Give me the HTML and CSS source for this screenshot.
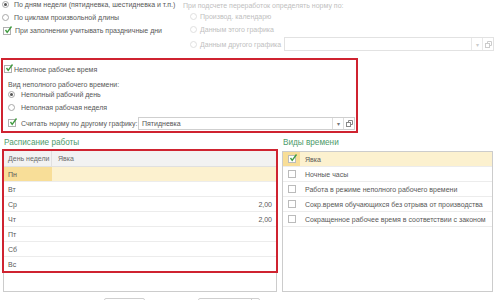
FILE: index.html
```html
<!DOCTYPE html>
<html>
<head>
    <title>График работы</title>
    <meta name="viewport" content="width=device-width,initial-scale=1">
    <link rel="stylesheet" href="styles.css">
</head>
<body>
<div class="page">
    <!-- верхняя часть: способ заполнения и норма -->
    <div class="top">
        <div class="top-left">
            <div class="opt r1"><span class="radio on"></span>По дням недели (пятидневка, шестидневка и т.п.)</div>
            <div class="opt r2"><span class="radio"></span>По циклам произвольной длины</div>
            <div class="opt r3"><span class="check on"><svg width="10" height="10" viewBox="0 0 10 10"><path d="M2.5 5 L4.2 7.3 L8.5 1.5" fill="none" stroke="#3f9b3f" stroke-width="1.4"/></svg></span>При заполнении учитывать праздничные дни</div>
        </div>
        <div class="top-right">
            <div class="caption">При подсчете переработок определять норму по:</div>
            <div class="opt dis q1"><span class="radio"></span>Производ. календарю</div>
            <div class="opt dis q2"><span class="radio"></span>Данным этого графика</div>
            <div class="opt dis q3"><span class="radio"></span><span class="lbl">Данным другого графика</span>
                <div class="field">
                    <span class="field-text"></span>
                    <span class="fbtn">▾</span>
                    <span class="fbtn"><svg width="7" height="7" viewBox="0 0 7 7"><rect x="0.5" y="2.5" width="4" height="4" fill="none" stroke="#ccc"/><path d="M2.5 2.5 V0.5 H6.5 V4.5 H4.5" fill="none" stroke="#ccc"/></svg></span>
                </div>
            </div>
        </div>
    </div>

    <!-- неполное рабочее время -->
    <div class="part">
        <div class="opt p1"><span class="check on"><svg width="10" height="10" viewBox="0 0 10 10"><path d="M2.5 5 L4.2 7.3 L8.5 1.5" fill="none" stroke="#3f9b3f" stroke-width="1.4"/></svg></span>Неполное рабочее время</div>
        <div class="opt p2">Вид неполного рабочего времени:</div>
        <div class="opt p3"><span class="radio on"></span>Неполный рабочий день</div>
        <div class="opt p4"><span class="radio"></span>Неполная рабочая неделя</div>
        <div class="opt p5"><span class="check on"><svg width="10" height="10" viewBox="0 0 10 10"><path d="M2.5 5 L4.2 7.3 L8.5 1.5" fill="none" stroke="#3f9b3f" stroke-width="1.4"/></svg></span><span class="lbl2">Считать норму по другому графику:</span>
            <div class="field on">
                <span class="field-text">Пятидневка</span>
                <span class="fbtn">▾</span>
                <span class="fbtn"><svg width="7" height="7" viewBox="0 0 7 7"><rect x="0.5" y="2.5" width="4" height="4" fill="none" stroke="#888"/><path d="M2.5 2.5 V0.5 H6.5 V4.5 H4.5" fill="none" stroke="#888"/></svg></span>
            </div>
        </div>
    </div>

    <!-- расписание и виды времени -->
    <div class="bottom">
        <div class="col-left">
            <div class="title">Расписание работы</div>
            <div class="panel">
                <div class="grid">
                    <div class="row head"><div class="c1">День недели</div><div class="c2">Явка</div></div>
                    <div class="row cur"><div class="c1">Пн</div><div class="c2"></div></div>
                    <div class="row"><div class="c1">Вт</div><div class="c2"></div></div>
                    <div class="row"><div class="c1">Ср</div><div class="c2 num">2,00</div></div>
                    <div class="row"><div class="c1">Чт</div><div class="c2 num">2,00</div></div>
                    <div class="row"><div class="c1">Пт</div><div class="c2"></div></div>
                    <div class="row"><div class="c1">Сб</div><div class="c2"></div></div>
                    <div class="row last"><div class="c1">Вс</div><div class="c2"></div></div>
                </div>
            </div>
        </div>
        <div class="col-right">
            <div class="title">Виды времени</div>
            <div class="panel kinds">
                <div class="krow cur"><div class="kc"><span class="check on"><svg width="10" height="10" viewBox="0 0 10 10"><path d="M2.5 5 L4.2 7.3 L8.5 1.5" fill="none" stroke="#3f9b3f" stroke-width="1.4"/></svg></span></div><div class="kt">Явка</div></div>
                <div class="krow"><div class="kc"><span class="check"></span></div><div class="kt">Ночные часы</div></div>
                <div class="krow"><div class="kc"><span class="check"></span></div><div class="kt">Работа в режиме неполного рабочего времени</div></div>
                <div class="krow"><div class="kc"><span class="check"></span></div><div class="kt">Сокр.время обучающихся без отрыва от производства</div></div>
                <div class="krow"><div class="kc"><span class="check"></span></div><div class="kt">Сокращенное рабочее время в соответствии с законом</div></div>
            </div>
        </div>
    </div>

    <!-- кнопки внизу (обрезаны) -->
    <div class="buttons">
        <div class="btn b1"></div>
        <div class="btn b2"><span class="b2-main"></span><span class="b2-arrow"></span></div>
    </div>
</div>
</body>
</html>
```

FILE: styles.css
```css
body {
    margin: 0;
    font-family: "Liberation Sans", Arial, sans-serif;
    font-size: 7px;
    color: #585858;
    background: #fff;
    overflow: hidden;
}

.page {
    width: 500px;
    height: 300px;
}

/* переключатели и флажки */
.opt {
    display: flex;
    align-items: center;
    white-space: nowrap;
}

.radio {
    box-sizing: border-box;
    width: 7px;
    height: 7px;
    border: 1px solid #a8a8a8;
    border-radius: 50%;
    margin-right: 5px;
    display: flex;
    align-items: center;
    justify-content: center;
    flex: none;
}

.radio.on::after {
    content: "";
    width: 3px;
    height: 3px;
    border-radius: 50%;
    background: #555;
}

.check {
    box-sizing: border-box;
    width: 8px;
    height: 8px;
    border: 1px solid #b0b0b0;
    background: #fff;
    position: relative;
    flex: none;
    margin-right: 3px;
}

.check svg {
    position: absolute;
    left: -1px;
    top: -3px;
}

.dis {
    color: #c0c0c0;
}

.dis .radio {
    border-color: #e0e0e0;
}

/* верх */
.top {
    display: flex;
    height: 58px;
}

.top-left {
    width: 183px;
    padding-left: 2px;
    box-sizing: border-box;
}

.r1 {
    height: 13px;
    margin-top: -2px;
}

.r2 {
    height: 13px;
}

.r3 {
    height: 13px;
    padding-left: 1px;
}

.r3 .check {
    margin-right: 4px;
}

.top-right {
    flex: 1;
    color: #c0c0c0;
}

.caption {
    line-height: 10px;
    margin-top: 1px;
}

.top-right .opt {
    padding-left: 7px;
}

.top-right .radio {
    margin-right: 3px;
}

.q1 {
    height: 10px;
}

.q2 {
    height: 16px;
}

.q3 {
    height: 14px;
}

.lbl {
    width: 84px;
}

.field {
    box-sizing: border-box;
    display: flex;
    height: 14px;
    width: 210px;
    border: 1px solid #e2e2e2;
    background: #fff;
}

.field-text {
    flex: 1;
    padding-left: 3px;
    display: flex;
    align-items: center;
}

.fbtn {
    width: 10px;
    border-left: 1px solid #e8e8e8;
    display: flex;
    align-items: center;
    justify-content: center;
    color: #ccc;
    font-size: 6px;
}

/* неполное рабочее время */
.part {
    box-sizing: border-box;
    margin-left: 1px;
    width: 357px;
    height: 75px;
    border: 2px solid #cf2330;
    padding-left: 1px;
}

.p1 {
    height: 18px;
}

.p1 .check {
    margin-right: 2px;
}

.p2 {
    height: 12px;
    padding-left: 4px;
}

.p3 {
    height: 9px;
    padding-left: 4px;
}

.p3 .radio,
.p4 .radio {
    margin-right: 6px;
}

.p4 {
    height: 16px;
    padding-left: 4px;
}

.p5 {
    height: 16px;
    padding-left: 4px;
}

.p5 .check {
    margin-right: 5px;
}

.lbl2 {
    width: 117px;
}

.field.on {
    width: 217px;
    height: 13px;
    border-color: #cfcfcf;
    color: #555;
}

.field.on .fbtn {
    color: #777;
    border-left-color: #ddd;
}

/* расписание */
.bottom {
    display: flex;
}

.col-left {
    margin-left: 3px;
    width: 274px;
}

.col-right {
    margin-left: 5px;
    width: 211px;
}

.title {
    height: 16px;
    padding-top: 4px;
    padding-left: 1px;
    box-sizing: border-box;
    font-size: 8.2px;
    line-height: 11px;
    color: #4e9b6b;
}

.panel {
    box-sizing: border-box;
    height: 143px;
    border: 1px solid #cccccc;
}

.grid {
    margin-top: 1px;
    outline: 2px solid #cf2330;
}

.row {
    display: flex;
    height: 15px;
    border-bottom: 1px solid #ececec;
    box-sizing: border-box;
}

.row.last {
    border-bottom: none;
    height: 14px;
}

.row.head {
    height: 16px;
    background: #f2f2f2;
    border-bottom: 1px solid #e0e0e0;
    color: #6a6a6a;
}

.c1 {
    width: 48px;
    padding-left: 4px;
    box-sizing: border-box;
    display: flex;
    align-items: center;
}

.head .c1 {
    border-right: 1px solid #e0e0e0;
}

.c2 {
    flex: 1;
    padding-left: 6px;
    padding-right: 4px;
    display: flex;
    align-items: center;
}

.c2.num {
    justify-content: flex-end;
}

.row.cur {
    background: #fcf1cf;
}

.row.cur .c1 {
    background: #f8de98;
}

/* виды времени */
.kinds {
    height: 141px;
    margin-top: 2px;
}

.krow {
    display: flex;
    height: 15px;
    border-bottom: 1px solid #ececec;
    box-sizing: border-box;
}

.krow.cur {
    background: #fcf1cf;
}

.kc {
    width: 17px;
    display: flex;
    align-items: center;
    justify-content: center;
}

.krow.cur .kc {
    background: #f8de98;
}

.kc .check {
    margin-right: 0;
    border-color: #bbb;
}

.kt {
    padding-left: 5px;
    display: flex;
    align-items: center;
    white-space: nowrap;
}

/* кнопки */
.buttons {
    display: flex;
    margin-top: 6px;
}

.btn {
    box-sizing: border-box;
    height: 14px;
    border: 1px solid #cfcfcf;
    border-radius: 2px;
}

.b1 {
    margin-left: 104px;
    width: 41px;
}

.b2 {
    margin-left: 53px;
    width: 62px;
    display: flex;
}

.b2-main {
    width: 52px;
    border-right: 1px solid #cfcfcf;
}
```
